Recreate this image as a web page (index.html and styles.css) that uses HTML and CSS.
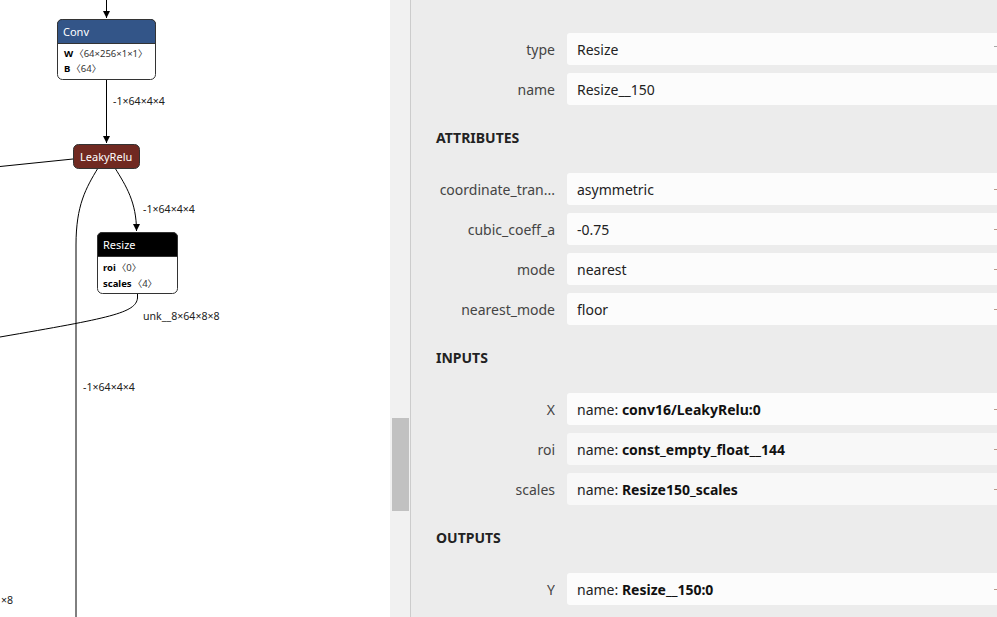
FILE: index.html
```html
<!DOCTYPE html>
<html>
<head>
<meta charset="utf-8">
<link rel="stylesheet" href="styles.css">
</head>
<body>
<div class="app">
  <div class="graph">
    <svg class="graph-svg" width="390" height="617" viewBox="0 0 390 617">
      <defs>
        <marker id="arrow" markerWidth="8" markerHeight="8" refX="7" refY="4" orient="auto" markerUnits="userSpaceOnUse">
          <path d="M0,0.5 L7,4 L0,7.5 z" fill="#000"/>
        </marker>
      </defs>
      <g class="edges" fill="none" stroke="#000" stroke-width="1">
        <path d="M106.5,0 L106.5,18" marker-end="url(#arrow)"/>
        <path d="M106.5,79 L106.5,143" marker-end="url(#arrow)"/>
        <path d="M0,166.5 L73,159"/>
        <path d="M98,168 C86,188 76,205 76,245 L76,617"/>
        <path d="M115,168 C126,186 136.5,202 136.5,231" marker-end="url(#arrow)"/>
        <path d="M137.5,293 L137.5,298 C136,313 110,318 0,337"/>
      </g>
      <g class="edge-labels">
        <text x="113" y="105">-1×64×4×4</text>
        <text x="143" y="213">-1×64×4×4</text>
        <text x="143" y="320">unk__8×64×8×8</text>
        <text x="83" y="391">-1×64×4×4</text>
        <text x="13" y="604" text-anchor="end">×8</text>
      </g>
      <g class="node">
        <rect x="57.5" y="19.5" width="98" height="60" rx="5" fill="#fff" stroke="#333"/>
        <path d="M57.5,43.5 L57.5,24.5 Q57.5,19.5 62.5,19.5 L150.5,19.5 Q155.5,19.5 155.5,24.5 L155.5,43.5 z" fill="#335588" stroke="#333"/>
        <text class="node-title" x="63" y="36">Conv</text>
        <text class="node-attr" x="64" y="57"><tspan class="attr-name">W</tspan><tspan dx="1">〈64×256×1×1〉</tspan></text>
        <text class="node-attr" x="64" y="72"><tspan class="attr-name">B</tspan><tspan dx="1">〈64〉</tspan></text>
      </g>
      <g class="node">
        <rect x="73.5" y="144.5" width="66" height="24" rx="5" fill="#702921" stroke="#333"/>
        <text class="node-title" x="80" y="161">LeakyRelu</text>
      </g>
      <g class="node">
        <rect x="97.5" y="232.5" width="80" height="61" rx="5" fill="#fff" stroke="#333"/>
        <path d="M97.5,256.5 L97.5,237.5 Q97.5,232.5 102.5,232.5 L172.5,232.5 Q177.5,232.5 177.5,237.5 L177.5,256.5 z" fill="#000" stroke="#333"/>
        <text class="node-title" x="103" y="249">Resize</text>
        <text class="node-attr" x="103" y="271"><tspan class="attr-name">roi</tspan><tspan dx="1">〈0〉</tspan></text>
        <text class="node-attr" x="103" y="287"><tspan class="attr-name">scales</tspan><tspan dx="1">〈4〉</tspan></text>
      </g>
    </svg>
  </div>
  <div class="scroll-track"><div class="scroll-thumb"></div></div>
  <div class="sidebar">
    <div class="row"><div class="label">type</div><div class="value"><span class="text">Resize</span><span class="expander alt"></span></div></div>
    <div class="row"><div class="label">name</div><div class="value"><span class="text">Resize__150</span></div></div>
    <div class="section">ATTRIBUTES</div>
    <div class="row"><div class="label">coordinate_tran...</div><div class="value"><span class="text">asymmetric</span><span class="expander"></span></div></div>
    <div class="row"><div class="label">cubic_coeff_a</div><div class="value"><span class="text">-0.75</span><span class="expander"></span></div></div>
    <div class="row"><div class="label">mode</div><div class="value"><span class="text">nearest</span><span class="expander"></span></div></div>
    <div class="row"><div class="label">nearest_mode</div><div class="value"><span class="text">floor</span><span class="expander"></span></div></div>
    <div class="section">INPUTS</div>
    <div class="row"><div class="label">X</div><div class="value"><span class="text">name: <b>conv16/LeakyRelu:0</b></span><span class="expander"></span></div></div>
    <div class="row"><div class="label">roi</div><div class="value init"><span class="text">name: <b>const_empty_float__144</b></span><span class="expander"></span></div></div>
    <div class="row"><div class="label">scales</div><div class="value init"><span class="text">name: <b>Resize150_scales</b></span><span class="expander"></span></div></div>
    <div class="section">OUTPUTS</div>
    <div class="row"><div class="label">Y</div><div class="value"><span class="text">name: <b>Resize__150:0</b></span><span class="expander"></span></div></div>
  </div>
</div>
</body>
</html>
```

FILE: styles.css
```css
html, body {
  margin: 0;
  padding: 0;
  width: 997px;
  height: 617px;
  overflow: hidden;
  background: #fff;
  font-family: "Noto Sans", "Open Sans", sans-serif;
}

.app {
  display: flex;
  width: 997px;
  height: 617px;
}

.graph {
  flex: none;
  width: 390px;
  height: 617px;
  background: #fff;
}

.graph-svg {
  display: block;
}

.edge-labels text {
  font-family: "Noto Sans", sans-serif;
  font-size: 10.6px;
  fill: #222;
}

.node-title {
  font-family: "Noto Sans", sans-serif;
  font-size: 11px;
  fill: #fff;
}

.node-attr {
  font-family: "Noto Sans", "Noto Sans CJK SC", sans-serif;
  font-size: 9.5px;
  fill: #333;
}

.attr-name {
  font-weight: bold;
  fill: #000;
}

.scroll-track {
  flex: none;
  width: 20px;
  height: 617px;
  background: #f1f1f1;
  border-right: 1px solid #cccccc;
  display: flex;
  flex-direction: column;
}

.scroll-thumb {
  margin-top: 418px;
  margin-left: 2px;
  width: 17px;
  height: 93px;
  background: #c1c1c1;
}

.sidebar {
  flex: none;
  width: 620px;
  height: 617px;
  background: #ececec;
  padding: 33px 0 0 25px;
  box-sizing: border-box;
}

.row {
  display: flex;
  align-items: center;
  gap: 12px;
  margin-bottom: 8px;
}

.label {
  flex: none;
  width: 119px;
  text-align: right;
  font-size: 14px;
  color: #444;
  white-space: nowrap;
  overflow: hidden;
}

.value {
  flex: none;
  width: 440px;
  height: 32px;
  box-sizing: border-box;
  background: #fcfcfc;
  border-radius: 3px;
  padding: 0 0 0 10px;
  display: flex;
  align-items: center;
  font-size: 14px;
  color: #222;
}

.value.init {
  background: #f8f8f8;
}

.value b {
  font-weight: bold;
  color: #111;
}

.expander {
  margin-left: auto;
  margin-right: 3px;
  width: 10px;
  height: 1px;
  background: #b89a8a;
}

.expander.alt {
  height: 1px;
  background: #a8a8a8;
  margin-bottom: 5px;
}

.section {
  font-size: 14px;
  font-weight: bold;
  color: #222;
  line-height: 20px;
  padding: 15px 0 25px 0;
}
```
